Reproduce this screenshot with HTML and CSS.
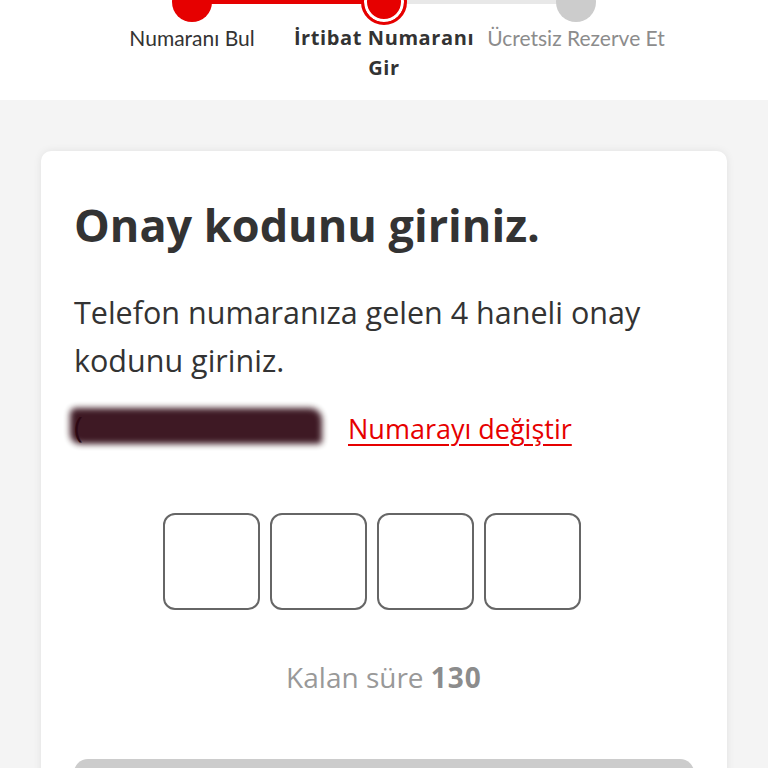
FILE: index.html
```html
<!DOCTYPE html>
<html lang="tr">

<head>
    <meta charset="UTF-8">
    <meta name="viewport" content="width=device-width, initial-scale=1.0">
    <title>Onay Kodu</title>
    <link rel="stylesheet" href="styles.css">
</head>

<body>
    <div class="stepper">
        <div class="track">
            <span class="line done"></span>
            <span class="line"></span>
        </div>
        <div class="steps">
            <div class="step done">
                <span class="dot"></span>
                <p>Numaranı Bul</p>
            </div>
            <div class="step current">
                <span class="dot"></span>
                <p>İrtibat Numaranı Gir</p>
            </div>
            <div class="step">
                <span class="dot"></span>
                <p>Ücretsiz Rezerve Et</p>
            </div>
        </div>
    </div>

    <main class="page">
        <div class="card">
            <h1>Onay kodunu giriniz.</h1>
            <p class="info">Telefon numaranıza gelen 4 haneli onay kodunu giriniz.</p>
            <div class="phone-row">
                <div class="phone">
                    <span class="paren">(</span>
                    <span class="scribble"></span>
                </div>
                <a href="#" class="change">Numarayı değiştir</a>
            </div>
            <div class="code">
                <input type="text" maxlength="1" class="digit">
                <input type="text" maxlength="1" class="digit">
                <input type="text" maxlength="1" class="digit">
                <input type="text" maxlength="1" class="digit">
            </div>
            <p class="timer">Kalan süre <b>130</b></p>
            <button class="submit"></button>
        </div>
    </main>
</body>

</html>
```

FILE: styles.css
```css
* {
    margin: 0px;
    padding: 0px;
    box-sizing: border-box;
}

body {
    background-color: #f4f4f4;
    font-family: "Open Sans", "Lato", sans-serif;
    color: #333333;
    overflow: hidden;
}

/* stepper */
.stepper {
    background-color: white;
    height: 100px;
    position: relative;
    overflow: hidden;
}

.track {
    position: absolute;
    top: 0px;
    left: 192px;
    width: 384px;
    display: flex;
}

.track .line {
    flex: 1;
    height: 4px;
    background-color: #e8e8e8;
}

.track .line.done {
    background-color: #e60000;
}

.steps {
    display: flex;
    justify-content: center;
}

.step {
    width: 192px;
    display: flex;
    flex-direction: column;
    align-items: center;
    position: relative;
}

.step .dot {
    width: 40px;
    height: 40px;
    margin-top: -18px;
    border-radius: 50%;
    background-color: #cccccc;
}

.step.done .dot {
    background-color: #e60000;
}

.step.current .dot {
    width: 46px;
    height: 46px;
    margin-top: -21px;
    background-color: #e60000;
    border: 3px solid #e60000;
    box-shadow: inset 0 0 0 3px white;
}

.step p {
    font-family: "Lato", sans-serif;
    font-size: 21px;
    line-height: 30px;
    color: #333333;
    text-align: center;
    margin-top: 1px;
    white-space: nowrap;
}

.step.current p {
    font-family: "Open Sans", sans-serif;
    font-weight: bold;
    font-size: 20px;
    white-space: normal;
    width: 190px;
    letter-spacing: 0.6px;
    margin-top: -2px;
}

.step:last-child p {
    color: #8c8c8c;
}

/* card */
.page {
    padding: 51px 41px 0px 41px;
}

.card {
    background-color: white;
    border-radius: 10px;
    box-shadow: 0 0 8px rgba(0, 0, 0, 0.08);
    padding: 46px 33px 40px 33px;
    height: 700px;
}

h1 {
    font-size: 45px;
    font-weight: 700;
    color: #333333;
    line-height: 56px;
}

.info {
    font-size: 30.5px;
    line-height: 48px;
    margin-top: 35px;
    width: 610px;
}

.phone-row {
    display: flex;
    align-items: center;
    gap: 32px;
    margin-top: 19px;
    height: 50px;
}

.phone {
    position: relative;
    width: 250px;
    height: 40px;
    margin-left: -8px;
}

.paren {
    position: absolute;
    left: 8px;
    top: -2px;
    font-size: 30px;
    color: #222222;
}

.scribble {
    position: absolute;
    left: 4px;
    top: 0px;
    width: 252px;
    height: 36px;
    background-color: #2e0612;
    border-radius: 6px 12px 4px 10px;
    filter: blur(3px);
    opacity: 0.92;
}

.change {
    font-size: 27px;
    color: #e60000;
    text-decoration: underline;
    text-underline-offset: 5px;
    text-decoration-thickness: 2px;
}

.code {
    display: flex;
    gap: 10px;
    margin-top: 60px;
    padding-left: 89px;
}

.digit {
    width: 97px;
    height: 97px;
    border: 2px solid #666666;
    border-radius: 12px;
    font-size: 40px;
    text-align: center;
    font-family: inherit;
}

.timer {
    text-align: center;
    font-size: 28px;
    line-height: 40px;
    color: #999999;
    margin-top: 47px;
}

.timer b {
    color: #8c8c8c;
    letter-spacing: 1px;
}

.submit {
    display: block;
    width: 100%;
    height: 60px;
    margin-top: 62px;
    border: none;
    border-radius: 14px;
    background-color: #cccccc;
}
```
